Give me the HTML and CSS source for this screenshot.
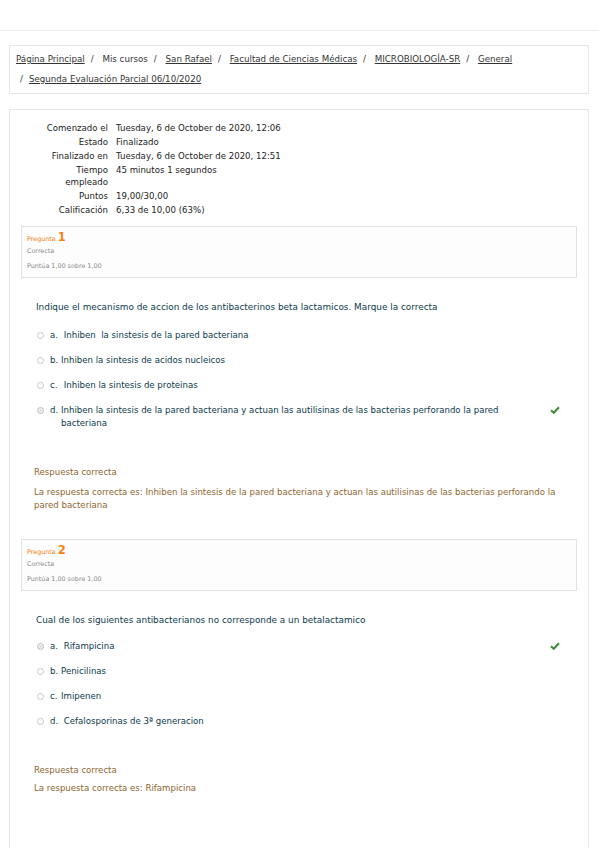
FILE: index.html
```html
<!DOCTYPE html>
<html lang="es">
<head>
<meta charset="utf-8">
<title>Segunda Evaluación Parcial</title>
<link rel="stylesheet" href="styles.css">
</head>
<body>
<header class="topbar"></header>

<nav class="breadcrumb">
  <div class="crumb-line">
    <a href="#">Página Principal</a><span class="sep">/</span>
    <span>Mis cursos</span><span class="sep">/</span>
    <a href="#">San Rafael</a><span class="sep">/</span>
    <a href="#">Facultad de Ciencias Médicas</a><span class="sep">/</span>
    <a href="#">MICROBIOLOGÍA-SR</a><span class="sep">/</span>
    <a href="#">General</a>
  </div>
  <div class="crumb-line second">
    <span class="sep first">/</span><a href="#">Segunda Evaluación Parcial 06/10/2020</a>
  </div>
</nav>

<main class="card">
  <table class="summary">
    <tr><th>Comenzado el</th><td>Tuesday, 6 de October de 2020, 12:06</td></tr>
    <tr><th>Estado</th><td>Finalizado</td></tr>
    <tr><th>Finalizado en</th><td>Tuesday, 6 de October de 2020, 12:51</td></tr>
    <tr><th>Tiempo<br>empleado</th><td>45 minutos 1 segundos</td></tr>
    <tr><th>Puntos</th><td>19,00/30,00</td></tr>
    <tr><th>Calificación</th><td>6,33 de 10,00 (63%)</td></tr>
  </table>

  <section class="question">
    <div class="info">
      <div class="qno">Pregunta <span class="num">1</span></div>
      <div class="state">Correcta</div>
      <div class="grade">Puntúa 1,00 sobre 1,00</div>
    </div>
    <div class="content">
      <p class="qtext">Indique el mecanismo de accion de los antibacterinos beta lactamicos. Marque la correcta</p>
      <div class="answers">
        <div class="opt"><span class="radio"></span><span class="lbl"><span class="let">a.</span> Inhiben &nbsp;la sinstesis de la pared bacteriana</span></div>
        <div class="opt"><span class="radio"></span><span class="lbl"><span class="let">b.</span>Inhiben la sintesis de acidos nucleicos</span></div>
        <div class="opt"><span class="radio"></span><span class="lbl"><span class="let">c.</span> Inhiben la sintesis de proteinas</span></div>
        <div class="opt"><span class="radio checked"></span><span class="lbl wrap"><span class="let">d.</span>Inhiben la sintesis de la pared bacteriana y actuan las autilisinas de las bacterias perforando la pared bacteriana</span>
          <svg class="tick" viewBox="0 0 10 8" width="10" height="8"><path d="M1 4.2 L3.8 6.8 L9 1.2" fill="none" stroke="#3d8b37" stroke-width="2"/></svg>
        </div>
      </div>
      <div class="feedback">
        <p class="fb-title">Respuesta correcta</p>
        <p class="fb-right">La respuesta correcta es: Inhiben la sintesis de la pared bacteriana y actuan las autilisinas de las bacterias perforando la pared bacteriana</p>
      </div>
    </div>
  </section>

  <section class="question">
    <div class="info">
      <div class="qno">Pregunta <span class="num">2</span></div>
      <div class="state">Correcta</div>
      <div class="grade">Puntúa 1,00 sobre 1,00</div>
    </div>
    <div class="content">
      <p class="qtext tight">Cual de los siguientes antibacterianos no corresponde a un betalactamico</p>
      <div class="answers">
        <div class="opt"><span class="radio checked"></span><span class="lbl"><span class="let">a.</span> Rifampicina</span>
          <svg class="tick" viewBox="0 0 10 8" width="10" height="8"><path d="M1 4.2 L3.8 6.8 L9 1.2" fill="none" stroke="#3d8b37" stroke-width="2"/></svg>
        </div>
        <div class="opt"><span class="radio"></span><span class="lbl"><span class="let">b.</span>Penicilinas</span></div>
        <div class="opt"><span class="radio"></span><span class="lbl"><span class="let">c.</span>Imipenen</span></div>
        <div class="opt"><span class="radio"></span><span class="lbl"><span class="let">d.</span> Cefalosporinas de 3ª generacion</span></div>
      </div>
      <div class="feedback short">
        <p class="fb-title">Respuesta correcta</p>
        <p class="fb-right">La respuesta correcta es: Rifampicina</p>
      </div>
    </div>
  </section>
</main>
</body>
</html>
```

FILE: styles.css
```css
html, body {
  margin: 0;
  padding: 0;
  background: #ffffff;
  font-family: "DejaVu Sans", "Liberation Sans", sans-serif;
  color: #333333;
}

.topbar {
  height: 30px;
  border-bottom: 1px solid #ececec;
  background: #ffffff;
}

.breadcrumb {
  margin: 14px 10px 0 9px;
  border: 1px solid #e6e6e6;
  padding: 3px 6px 4px 6px;
  font-size: 8.7px;
}

.crumb-line {
  height: 20px;
  line-height: 20px;
  white-space: nowrap;
}

.crumb-line a {
  color: #333333;
  text-decoration: underline;
}

.sep {
  margin: 0 6px;
}

.sep.first {
  margin-left: 4px;
  margin-right: 6px;
}

.card {
  margin: 15px 10px 0 9px;
  border: 1px solid #e6e6e6;
  border-bottom: none;
  padding: 11px 11px 40px 11px;
}

.summary {
  border-collapse: collapse;
  font-size: 8.6px;
  color: #222222;
}

.summary th {
  width: 87px;
  text-align: right;
  font-weight: normal;
  padding: 1px 8px 1px 0;
  line-height: 12px;
  vertical-align: top;
}

.summary td {
  padding: 1px 0;
  line-height: 12px;
  vertical-align: top;
  white-space: nowrap;
}

.question {
  margin-top: 9px;
}

.info {
  border: 1px solid #e0e3e6;
  height: 48px;
  padding: 2px 5px 0 5px;
  background: #fdfdfd;
}

.qno {
  color: #f98012;
  font-size: 6.4px;
  height: 15px;
  line-height: 16px;
}

.qno .num {
  font-size: 11.5px;
  font-weight: bold;
}

.state, .grade {
  color: #8a8a8a;
  font-size: 6.4px;
  height: 15px;
  line-height: 15px;
}

.content {
  padding: 22px 0 18px 13px;
}

.qtext {
  margin: 0 0 16px 2px;
  padding-top: 1px;
  font-size: 8.9px;
  color: #0b3a4a;
  line-height: 12px;
  white-space: nowrap;
}

.qtext.tight {
  margin-bottom: 14px;
}

.answers {
  display: flex;
  flex-direction: column;
  gap: 12px;
}

.opt {
  display: flex;
  align-items: flex-start;
  font-size: 8.6px;
  color: #0b3a4a;
  line-height: 13px;
  padding-left: 3px;
  width: 523px;
}

.radio {
  flex: none;
  width: 7px;
  height: 7px;
  border: 1px solid #c8c8c8;
  border-radius: 50%;
  margin: 3px 6px 0 0;
  box-sizing: border-box;
  background: #ffffff;
}

.radio.checked {
  background: #d6d6d6;
  border-color: #c4c4c4;
  box-shadow: inset 0 0 0 1.5px #f0f0f0;
}

.lbl {
  flex: 1;
}

.lbl.wrap {
  padding-left: 11px;
  text-indent: -11px;
  width: 449px;
  flex: none;
}

.let {
  display: inline-block;
  width: 11px;
  text-indent: 0;
}

.tick {
  margin-left: auto;
  margin-top: 2px;
  margin-right: 0;
}

.feedback {
  margin-top: 36px;
  padding-left: 0;
  color: #8e662e;
  font-size: 8.6px;
}

.feedback.short .fb-title {
  margin-bottom: 5px;
}

.fb-title {
  margin: 0 0 7px 0;
  line-height: 13px;
}

.fb-right {
  margin: 0;
  line-height: 13px;
  max-width: 530px;
}
```
